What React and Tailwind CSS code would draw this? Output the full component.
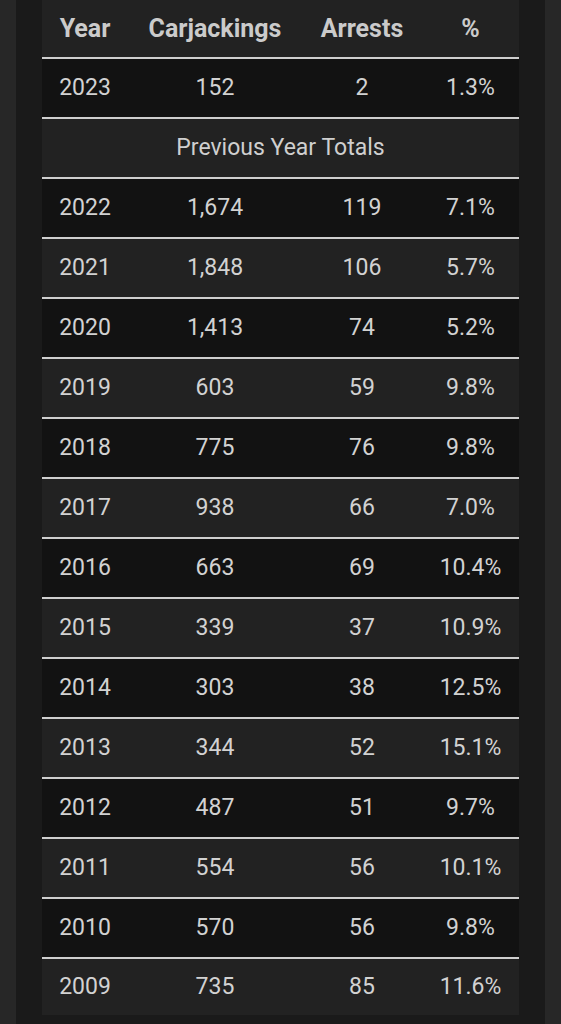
import React from 'react';

const rows = [
  ['2023', '152', '2', '1.3%'],
  'Previous Year Totals',
  ['2022', '1,674', '119', '7.1%'],
  ['2021', '1,848', '106', '5.7%'],
  ['2020', '1,413', '74', '5.2%'],
  ['2019', '603', '59', '9.8%'],
  ['2018', '775', '76', '9.8%'],
  ['2017', '938', '66', '7.0%'],
  ['2016', '663', '69', '10.4%'],
  ['2015', '339', '37', '10.9%'],
  ['2014', '303', '38', '12.5%'],
  ['2013', '344', '52', '15.1%'],
  ['2012', '487', '51', '9.7%'],
  ['2011', '554', '56', '10.1%'],
  ['2010', '570', '56', '9.8%'],
  ['2009', '735', '85', '11.6%'],
];

const cols = 'grid grid-cols-[86px_174px_120px_97px] items-center';

const App = () => {
  return (
    <div className="flex min-h-[1024px] bg-[#272727]" style={{ fontFamily: 'Roboto, "Noto Sans", sans-serif' }}>
      <div className="w-[16px] shrink-0" />
      <div className="w-[529px] shrink-0 bg-[#1a1a1a] px-[26px]">
        <div className="w-[477px]">
          <div className={`${cols} h-[59px] bg-[#222222] border-b-2 border-[#cfcfcf] text-[25px] font-bold text-[#cbcbcb]`}>
            <div className="text-center">Year</div>
            <div className="text-center">Carjackings</div>
            <div className="text-center">Arrests</div>
            <div className="text-center">%</div>
          </div>
          {rows.map((row, i) => {
            const last = i === rows.length - 1;
            const bg = i % 2 === 0 ? 'bg-[#121212]' : 'bg-[#222222]';
            const border = last ? 'h-[56px]' : 'h-[60px] border-b-2 border-[#cfcfcf]';
            if (typeof row === 'string') {
              return (
                <div key={i} className={`flex items-center justify-center ${bg} ${border} text-[23px] text-[#cfcfcf]`}>
                  {row}
                </div>
              );
            }
            return (
              <div key={i} className={`${cols} ${bg} ${border} text-[23px] text-[#d2d2d2]`}>
                {row.map((cell, j) => (
                  <div key={j} className="text-center">{cell}</div>
                ))}
              </div>
            );
          })}
        </div>
      </div>
      <div className="w-[16px] shrink-0" />
    </div>
  );
};

export default App;
